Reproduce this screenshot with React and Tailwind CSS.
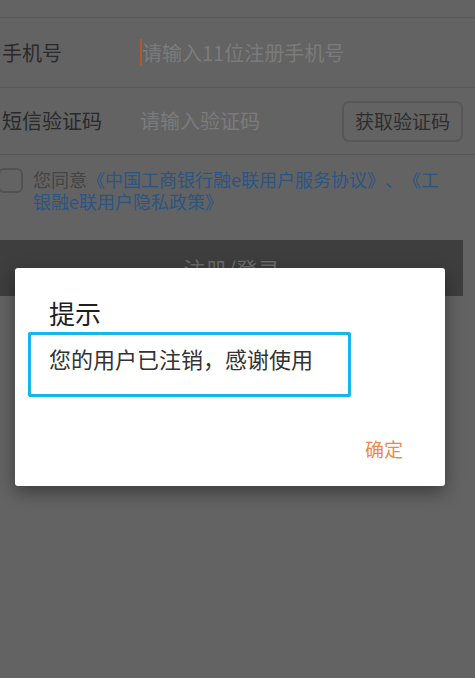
export default function App() {
  return (
    <div className="relative w-[475px] h-[678px] overflow-hidden bg-[#636363] font-['Noto_Sans_CJK_SC','Noto_Sans',sans-serif] [text-spacing-trim:space-all]">
      {/* top divider */}
      <div className="h-[18px] border-b border-[#585858]" />

      {/* phone row */}
      <div className="h-[70px] flex items-center border-b border-[#585858]">
        <span className="w-[140px] pl-[2px] text-[20px] text-[#2a2a2a]">手机号</span>
        <span className="w-[2px] h-[27px] bg-[#b2582b]" />
        <span className="text-[20px] text-[#7b7b7b]">请输入11位注册手机号</span>
      </div>

      {/* sms code row */}
      <div className="h-[67px] flex items-center border-b border-[#585858]">
        <span className="w-[140px] pl-[2px] text-[20px] text-[#2a2a2a]">短信验证码</span>
        <span className="flex-1 text-[20px] text-[#7b7b7b]">请输入验证码</span>
        <button className="mr-[12px] w-[121px] h-[41px] rounded-[7px] border-2 border-[#575757] text-[19px] text-[#2e2e2e]">
          获取验证码
        </button>
      </div>

      {/* agreement */}
      <div className="mt-[13px] flex items-start">
        <span className="ml-[-2px] w-[25px] h-[25px] shrink-0 rounded-[6px] border-2 border-[#525252]" />
        <p className="ml-[10px] w-[418px] text-[18px] leading-[22px] text-[#454545]">
          您同意<span className="text-[#2b5583]">《中国工商银行融e联用户服务协议》、《工银融e联用户隐私政策》</span>
        </p>
      </div>

      {/* submit */}
      <div className="mt-[28px] w-[463px] h-[56px] bg-[#3e3e3e] flex items-center justify-center text-[22px] text-[#6c6c6c]">
        注册/登录
      </div>

      {/* dialog */}
      <div className="absolute left-[15px] top-[268px] w-[430px] h-[218px] bg-white rounded-[3px] shadow-[0_6px_18px_rgba(0,0,0,0.4)] flex flex-col">
        <h2 className="pt-[30px] pl-[34px] text-[26px] leading-[30px] text-[#1e1e1e]">提示</h2>
        <div className="mt-[4px] ml-[13px] w-[323px] h-[65px] border-[3px] border-[#18b6e8] rounded-[2px] pt-[10px] pl-[18px]">
          <p className="text-[22px] leading-[26px] text-[#333]">您的用户已注销，感谢使用</p>
        </div>
        <div className="mt-[40px] pr-[42px] flex justify-end">
          <span className="text-[19px] leading-[24px] text-[#ec8a4e]">确定</span>
        </div>
      </div>
    </div>
  );
}
